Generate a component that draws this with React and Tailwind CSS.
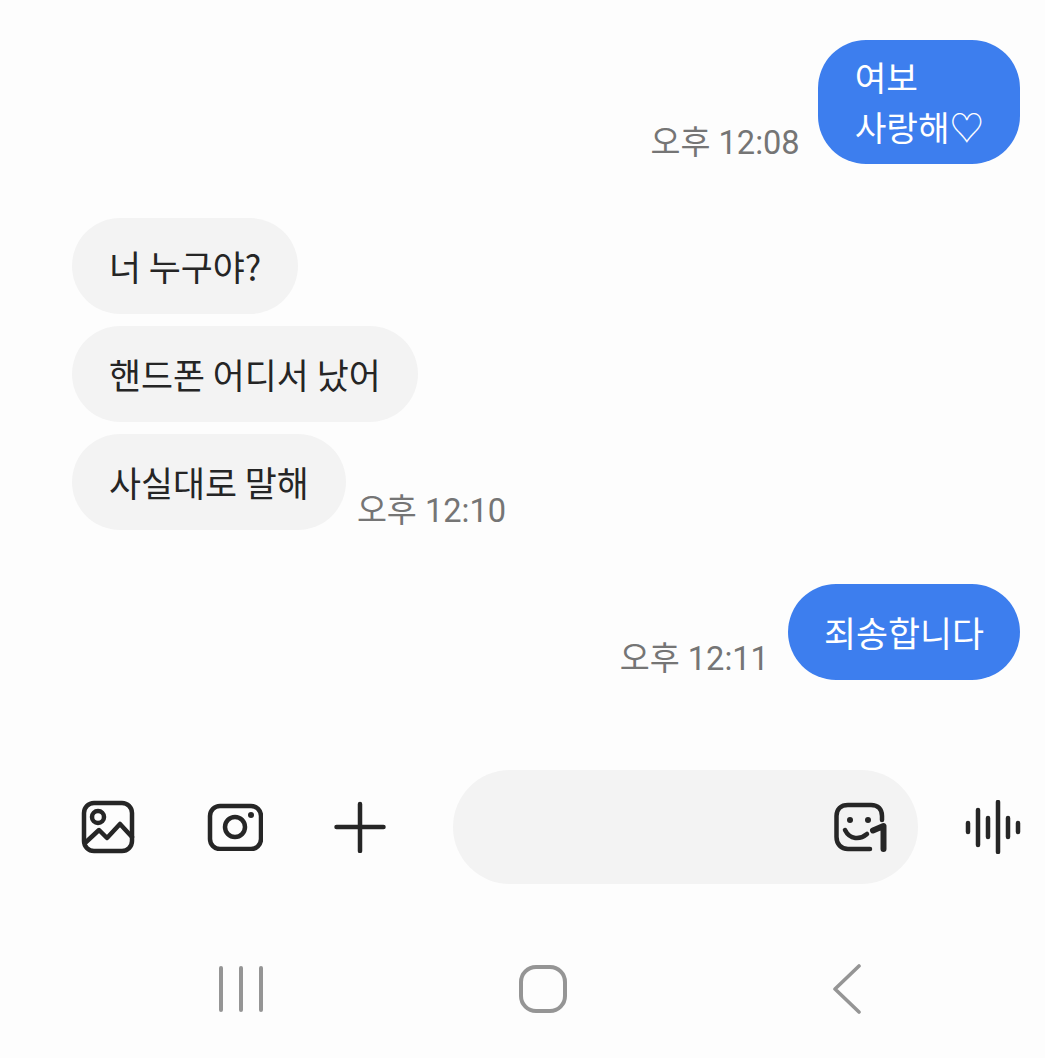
import React from "react";

const KR = "font-['Noto_Sans_CJK_KR','Noto_Sans',sans-serif]";

function Time({ children }) {
  return (
    <span className="font-['Roboto','Noto_Sans_CJK_KR',sans-serif] text-[32.6px] leading-[38px] text-[#757575] whitespace-nowrap">
      {children}
    </span>
  );
}

function Bubble({ mine, children }) {
  return (
    <div
      className={`${KR} rounded-[48px] h-[96px] flex items-center text-[34.8px] leading-[50px] whitespace-nowrap ${
        mine ? "px-[36px] bg-[#3d7eee] text-white" : "px-[37px] bg-[#f3f3f3] text-[#252525]"
      }`}
    >
      {children}
    </div>
  );
}

function GalleryIcon() {
  return (
    <svg width="54" height="54" viewBox="0 0 54 54" fill="none" stroke="#262626" strokeWidth="4.5" strokeLinecap="round" strokeLinejoin="round">
      <rect x="3" y="3" width="48" height="48" rx="10" />
      <circle cx="17" cy="17" r="6" />
      <path d="M4 43 L18 30 L26 38 L39 24 L51 37" />
    </svg>
  );
}

function CameraIcon() {
  return (
    <svg width="56" height="48" viewBox="0 0 56 48" fill="none" stroke="#262626" strokeWidth="4.5">
      <rect x="3" y="3" width="51" height="43" rx="10" />
      <circle cx="28" cy="24" r="10" />
      <circle cx="44" cy="12" r="3" fill="#262626" stroke="none" />
    </svg>
  );
}

function PlusIcon() {
  return (
    <svg width="52" height="52" viewBox="0 0 52 52" fill="none" stroke="#262626" strokeWidth="4.5" strokeLinecap="round">
      <path d="M26 3 V50 M2.5 26 H49.5" />
    </svg>
  );
}

function StickerIcon() {
  return (
    <svg width="54" height="50" viewBox="0 0 54 50" fill="none" stroke="#262626" strokeWidth="4.5" strokeLinecap="round" strokeLinejoin="round">
      <path d="M36 47 H14 C7 47 2.5 42 2.5 35 V14 C2.5 7 7 3 14 3 H37 C44 3 48 7 48 14 V18" />
      <circle cx="16" cy="18" r="3" fill="#262626" stroke="none" />
      <circle cx="34" cy="18" r="3" fill="#262626" stroke="none" />
      <path d="M11 28 C16 38 26 38 33 32" />
      <path d="M39 28.5 L49.5 24 V47" strokeWidth="6" />
    </svg>
  );
}

function WaveIcon() {
  return (
    <svg width="56" height="54" viewBox="0 0 56 54" fill="none" stroke="#262626" strokeWidth="4.5" strokeLinecap="round">
      <path d="M3 23 V32 M13 10 V45 M23 18 V37 M33 2 V52 M43 18 V37 M53 23 V32" />
    </svg>
  );
}

function RecentsIcon() {
  return (
    <svg width="44" height="46" viewBox="0 0 44 46" fill="none" stroke="#959595" strokeWidth="4" strokeLinecap="round">
      <path d="M2 2 V44 M22 2 V44 M42 2 V44" />
    </svg>
  );
}

function HomeIcon() {
  return (
    <svg width="48" height="48" viewBox="0 0 48 48" fill="none" stroke="#959595" strokeWidth="4">
      <rect x="2" y="2" width="44" height="44" rx="15" />
    </svg>
  );
}

function BackIcon() {
  return (
    <svg width="30" height="50" viewBox="0 0 30 50" fill="none" stroke="#959595" strokeWidth="3.6" strokeLinecap="round" strokeLinejoin="round">
      <path d="M27 2 L3 25 L27 48" />
    </svg>
  );
}

export default function App() {
  return (
    <div className="w-[1045px] h-[1058px] bg-[#fdfdfd] overflow-hidden flex flex-col">
      <div className="pl-[72px] pr-[25px] pt-[40px] flex flex-col">
        {/* first sent message */}
        <div className="flex justify-end items-end gap-[18px]">
          <div className="mb-[2px]">
            <Time>오후 12:08</Time>
          </div>
          <div className={`${KR} rounded-[48px] h-[124px] bg-[#3d7eee] text-white pl-[37px] pr-[36px] pt-[11px] text-[34.4px] leading-[50px] whitespace-nowrap`}>
            <div>여보</div>
            <div>사랑해♡</div>
          </div>
        </div>

        {/* received */}
        <div className="mt-[54px] flex flex-col items-start gap-[12px]">
          <Bubble>너 누구야?</Bubble>
          <Bubble>핸드폰 어디서 났어</Bubble>
          <div className="flex items-end gap-[11px]">
            <Bubble>사실대로 말해</Bubble>
            <Time>오후 12:10</Time>
          </div>
        </div>

        {/* second sent message */}
        <div className="mt-[54px] flex justify-end items-end gap-[19px]">
          <div className="mb-[2px]">
            <Time>오후 12:11</Time>
          </div>
          <Bubble mine>죄송합니다</Bubble>
        </div>
      </div>

      {/* input row */}
      <div className="mt-[90px] h-[114px] flex items-center pl-[81px]">
        <GalleryIcon />
        <div className="ml-[72px]">
          <CameraIcon />
        </div>
        <div className="ml-[71px]">
          <PlusIcon />
        </div>
        <div className="ml-[67px] w-[465px] h-[114px] rounded-[57px] bg-[#f3f3f3] flex items-center justify-end pr-[30px]">
          <StickerIcon />
        </div>
        <div className="ml-[47px]">
          <WaveIcon />
        </div>
      </div>

      {/* system nav bar */}
      <div className="mt-[80px] flex items-center pl-[219px]">
        <RecentsIcon />
        <div className="ml-[256px]">
          <HomeIcon />
        </div>
        <div className="ml-[265px]">
          <BackIcon />
        </div>
      </div>
    </div>
  );
}
